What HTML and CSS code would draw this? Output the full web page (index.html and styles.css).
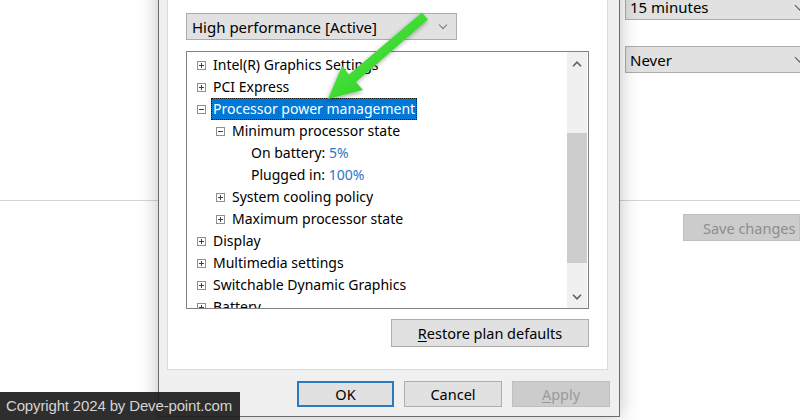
FILE: index.html
```html
<!DOCTYPE html>
<html>
<head>
<meta charset="utf-8">
<link rel="stylesheet" href="styles.css">
</head>
<body>
<div class="desktop">
  <div class="bg">
    <div class="settings">
      <div class="combo combo-top"><span>15 minutes</span><i class="chev"></i></div>
      <div class="combo"><span>Never</span><i class="chev"></i></div>
    </div>
    <div class="divider"></div>
    <div class="actions"><button class="btn btn-disabled save">Save changes</button></div>
  </div>

  <div class="dialog">
    <div class="panel">
      <div class="combo plan"><span>High performance [Active]</span><i class="chev"></i></div>
      <div class="tree">
        <div class="rows">
          <div class="row l0"><i class="exp plus"></i><span class="label">Intel(R) Graphics Settings</span></div>
          <div class="row l0"><i class="exp plus"></i><span class="label">PCI Express</span></div>
          <div class="row l0"><i class="exp"></i><span class="label selected">Processor power management</span></div>
          <div class="row l1"><i class="exp"></i><span class="label">Minimum processor state</span></div>
          <div class="row l2"><i class="exp none"></i><span class="label">On battery: <span class="val">5%</span></span></div>
          <div class="row l2"><i class="exp none"></i><span class="label">Plugged in: <span class="val">100%</span></span></div>
          <div class="row l1"><i class="exp plus"></i><span class="label">System cooling policy</span></div>
          <div class="row l1"><i class="exp plus"></i><span class="label">Maximum processor state</span></div>
          <div class="row l0"><i class="exp plus"></i><span class="label">Display</span></div>
          <div class="row l0"><i class="exp plus"></i><span class="label">Multimedia settings</span></div>
          <div class="row l0"><i class="exp plus"></i><span class="label">Switchable Dynamic Graphics</span></div>
          <div class="row l0"><i class="exp plus"></i><span class="label">Battery</span></div>
        </div>
        <div class="scrollbar">
          <div class="sb-btn"><svg width="10" height="6" viewBox="0 0 10 6"><path d="M1 5.2 L5 1.2 L9 5.2" fill="none" stroke="#606060" stroke-width="1.6"/></svg></div>
          <div class="sb-track"><div class="sb-thumb"></div></div>
          <div class="sb-btn"><svg width="10" height="6" viewBox="0 0 10 6"><path d="M1 0.8 L5 4.8 L9 0.8" fill="none" stroke="#606060" stroke-width="1.6"/></svg></div>
        </div>
      </div>
      <button class="btn restore"><u>R</u>estore plan defaults</button>
    </div>
    <div class="buttons">
      <button class="btn ok">OK</button>
      <button class="btn">Cancel</button>
      <button class="btn btn-disabled"><u>A</u>pply</button>
    </div>
  </div>

  <svg class="arrow" width="800" height="420" viewBox="0 0 800 420">
    <defs>
      <linearGradient id="g" x1="0" y1="0" x2="1" y2="1">
        <stop offset="0" stop-color="#5cf04a"/>
        <stop offset="1" stop-color="#22c61e"/>
      </linearGradient>
      <filter id="sh" x="-20%" y="-20%" width="140%" height="140%">
        <feDropShadow dx="-1" dy="2" stdDeviation="2" flood-color="#000" flood-opacity="0.35"/>
      </filter>
    </defs>
    <polygon filter="url(#sh)" fill="url(#g)" points="422,12.5 428,19.5 356,82 363,90 328,99 342,66 349,74.4"/>
  </svg>

  <div class="watermark">Copyright 2024 by Deve-point.com</div>
</div>
</body>
</html>
```

FILE: styles.css
```css
* { box-sizing: border-box; }
html, body { margin: 0; padding: 0; }
body {
  width: 800px;
  height: 420px;
  overflow: hidden;
  background: #ffffff;
  font-family: "Noto Sans", "Open Sans", sans-serif;
  font-size: 14px;
  color: #000;
}
.desktop {
  position: relative;
  width: 800px;
  height: 420px;
  overflow: hidden;
}

/* background settings page */
.settings {
  display: flex;
  flex-direction: column;
  gap: 26px;
  margin-left: 625px;
  margin-top: -7px;
}
.combo {
  display: flex;
  align-items: center;
  justify-content: space-between;
  height: 27px;
  width: 186px;
  background: #e1e1e1;
  border: 1px solid #adadad;
  padding: 0 7px 0 4px;
  font-size: 15px;
  color: #000;
}
.combo-top { padding-top: 1px; }
.chev {
  display: block;
  width: 7px;
  height: 7px;
  border-right: 1px solid #555;
  border-bottom: 1px solid #555;
  transform: translateY(-2px) rotate(45deg);
}
.divider {
  margin-top: 127px;
  height: 1px;
  background: #d4d4d4;
}
.actions {
  display: flex;
  margin-top: 13px;
  padding-left: 683px;
}
.btn {
  font-family: inherit;
  font-size: 14px;
  color: #000;
  background: #e1e1e1;
  border: 1px solid #adadad;
  height: 26px;
  padding: 0;
  margin: 0;
}
.btn u { text-decoration: underline; text-underline-offset: 2px; }
.btn-disabled {
  background: #cccccc;
  border-color: #bfbfbf;
  color: #8d8d8d;
}
.save {
  width: 130px;
  height: 27px;
  text-align: left;
  padding-left: 19px;
  font-size: 14.5px;
}

/* dialog window */
.dialog {
  position: absolute;
  left: 158px;
  top: -30px;
  width: 462px;
  background: #f0f0f0;
  border: 1px solid #6b6b6b;
  box-shadow: 0 0 18px rgba(0, 0, 0, 0.26);
  padding: 0 9px 9px 8px;
}
.panel {
  margin-right: 2px;
  background: #fff;
  border: 1px solid #dadada;
  padding: 41px 18px 22px 18px;
  display: flex;
  flex-direction: column;
}
.plan {
  width: 271px;
  padding: 0 10px 0 5px;
}
.plan .chev { border-color: #777; width: 6px; height: 6px; }
.tree {
  margin-top: 11px;
  height: 258px;
  border: 1px solid #828282;
  display: flex;
  overflow: hidden;
}
.rows {
  flex: 1;
  padding-top: 2px;
  overflow: hidden;
}
.row {
  height: 22px;
  display: flex;
  align-items: center;
  gap: 5px;
  white-space: nowrap;
  font-size: 14px;
}
.l0 { padding-left: 10px; }
.l1 { padding-left: 29px; }
.l2 { padding-left: 48px; }
.exp {
  position: relative;
  flex: none;
  width: 9px;
  height: 9px;
  border: 1px solid #8e8e8e;
  background: #fff;
}
.exp::before {
  content: "";
  position: absolute;
  left: 1px;
  top: 3px;
  width: 5px;
  height: 1px;
  background: #404040;
}
.exp.plus::after {
  content: "";
  position: absolute;
  left: 3px;
  top: 1px;
  width: 1px;
  height: 5px;
  background: #404040;
}
.exp.none { border: none; }
.exp.none::before { display: none; }
.label {
  padding: 0 1px;
  line-height: 20px;
  border: 1px solid transparent;
}
.label.selected {
  background: #0078d7;
  color: #fff;
  border: 1px dotted #1a1a1a;
}
.val { color: #2a78c4; }

.scrollbar {
  flex: none;
  width: 20px;
  margin-right: 1px;
  background: #f0f0f0;
  display: flex;
  flex-direction: column;
}
.sb-btn {
  height: 23px;
  display: flex;
  align-items: center;
  justify-content: center;
}
.sb-track { flex: 1; }
.sb-thumb {
  margin-top: 58px;
  height: 130px;
  background: #cdcdcd;
}
.restore {
  margin-top: 10px;
  align-self: flex-end;
  width: 198px;
  height: 28px;
  font-size: 14.5px;
}

.buttons {
  display: flex;
  justify-content: flex-end;
  gap: 10px;
  margin-top: 11px;
}
.buttons .btn { width: 98px; font-size: 14.5px; }
.buttons .btn-disabled { color: #9a9a9a; }
.buttons .ok {
  width: 97px;
  border: 2px solid #2a7bc0;
  background: #e1e1e1;
}

.arrow {
  position: absolute;
  left: 0;
  top: 0;
  pointer-events: none;
}
.watermark {
  position: absolute;
  left: 0;
  bottom: 0;
  width: 240px;
  height: 28px;
  line-height: 28px;
  padding-left: 6px;
  background: rgba(30, 30, 30, 0.93);
  color: #d4d4d4;
  font-family: "Liberation Sans", Arial, sans-serif;
  font-size: 15px;
  letter-spacing: -0.15px;
  white-space: nowrap;
}
```
